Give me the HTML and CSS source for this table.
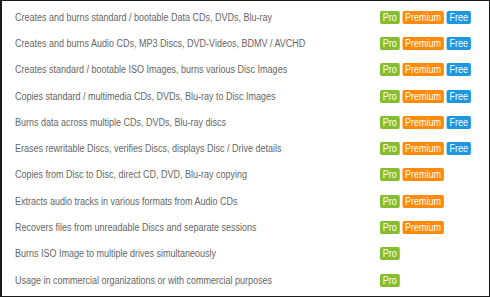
FILE: index.html
```html
<!DOCTYPE html>
<html>
<head>
<meta charset="utf-8">
<link rel="stylesheet" href="styles.css">
</head>
<body>
<div class="frame">
  <div class="row"><span class="desc">Creates and burns standard / bootable Data CDs, DVDs, Blu-ray</span><span class="tags"><span class="tag pro">Pro</span><span class="tag prem">Premium</span><span class="tag free">Free</span></span></div>
  <div class="row"><span class="desc">Creates and burns Audio CDs, MP3 Discs, DVD-Videos, BDMV / AVCHD</span><span class="tags"><span class="tag pro">Pro</span><span class="tag prem">Premium</span><span class="tag free">Free</span></span></div>
  <div class="row"><span class="desc">Creates standard / bootable ISO Images, burns various Disc Images</span><span class="tags"><span class="tag pro">Pro</span><span class="tag prem">Premium</span><span class="tag free">Free</span></span></div>
  <div class="row"><span class="desc">Copies standard / multimedia CDs, DVDs, Blu-ray to Disc Images</span><span class="tags"><span class="tag pro">Pro</span><span class="tag prem">Premium</span><span class="tag free">Free</span></span></div>
  <div class="row"><span class="desc">Burns data across multiple CDs, DVDs, Blu-ray discs</span><span class="tags"><span class="tag pro">Pro</span><span class="tag prem">Premium</span><span class="tag free">Free</span></span></div>
  <div class="row"><span class="desc">Erases rewritable Discs, verifies Discs, displays Disc / Drive details</span><span class="tags"><span class="tag pro">Pro</span><span class="tag prem">Premium</span><span class="tag free">Free</span></span></div>
  <div class="row"><span class="desc">Copies from Disc to Disc, direct CD, DVD, Blu-ray copying</span><span class="tags"><span class="tag pro">Pro</span><span class="tag prem">Premium</span></span></div>
  <div class="row"><span class="desc">Extracts audio tracks in various formats from Audio CDs</span><span class="tags"><span class="tag pro">Pro</span><span class="tag prem">Premium</span></span></div>
  <div class="row"><span class="desc">Recovers files from unreadable Discs and separate sessions</span><span class="tags"><span class="tag pro">Pro</span><span class="tag prem">Premium</span></span></div>
  <div class="row"><span class="desc">Burns ISO Image to multiple drives simultaneously</span><span class="tags"><span class="tag pro">Pro</span></span></div>
  <div class="row"><span class="desc">Usage in commercial organizations or with commercial purposes</span><span class="tags"><span class="tag pro">Pro</span></span></div>
</div>
</body>
</html>
```
FILE: styles.css
```css
html, body {
  margin: 0;
  padding: 0;
  background: #fff;
}
.frame {
  box-sizing: border-box;
  width: 490px;
  height: 297px;
  border-style: solid;
  border-color: #1a1a1a;
  border-width: 1px 1px 1px 2px;
  padding: 3px 0 0 13px;
  font-family: "Liberation Sans", Arial, sans-serif;
  font-size: 10px;
  color: #666;
}
.row {
  display: grid;
  grid-template-columns: 365px auto;
  align-items: center;
  height: 26.3px;
}
.desc {
  display: inline-block;
  white-space: nowrap;
  transform: scaleX(0.9);
  transform-origin: left center;
}
.tags {
  display: flex;
  gap: 3.3px;
  transform: scaleX(0.9);
  transform-origin: left center;
}
.tag {
  display: inline-block;
  color: #fff;
  font-size: 10px;
  line-height: 13px;
  padding: 0 3px;
  border-radius: 2px;
}
.pro { background: #86bd30; }
.prem { background: #ff8a0c; }
.free { background: #1d97e0; }
```
